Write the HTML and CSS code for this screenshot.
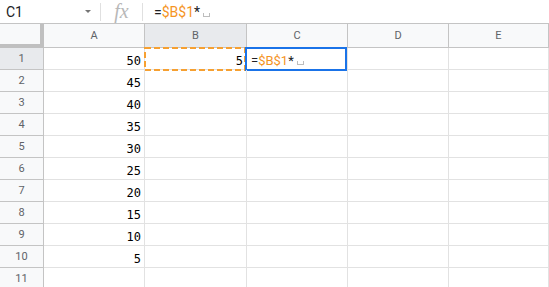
FILE: index.html
```html
<!DOCTYPE html>
<html>
<head>
	<title>Sheet</title>
	<meta charset="UTF-8">
	<link rel="stylesheet" href="styles.css">
</head>
<body>
	<div id="formula_bar">
		<div class="name_box"><span>C1</span><span class="caret"></span></div>
		<div class="fx_box">fx</div>
		<div class="formula">=<span class="ref">$B$1</span>*<span class="space_mark"></span></div>
	</div>
	<div id="sheet">
		<div class="corner"></div>
		<div class="col_head">A</div>
		<div class="col_head picked">B</div>
		<div class="col_head">C</div>
		<div class="col_head">D</div>
		<div class="col_head">E</div>

		<div class="row_head picked">1</div>
		<div class="cell num">50</div>
		<div class="cell num copied">5<svg class="copy_marks" width="102" height="24"><rect x="1" y="1" width="100" height="22" fill="none" stroke="#f6a031" stroke-width="2" stroke-dasharray="6 3" /></svg></div>
		<div class="cell active">=<span class="ref">$B$1</span>*<span class="space_mark"></span></div>
		<div class="cell"></div>
		<div class="cell"></div>

		<div class="row_head">2</div>
		<div class="cell num">45</div>
		<div class="cell"></div><div class="cell"></div><div class="cell"></div><div class="cell"></div>

		<div class="row_head">3</div>
		<div class="cell num">40</div>
		<div class="cell"></div><div class="cell"></div><div class="cell"></div><div class="cell"></div>

		<div class="row_head">4</div>
		<div class="cell num">35</div>
		<div class="cell"></div><div class="cell"></div><div class="cell"></div><div class="cell"></div>

		<div class="row_head">5</div>
		<div class="cell num">30</div>
		<div class="cell"></div><div class="cell"></div><div class="cell"></div><div class="cell"></div>

		<div class="row_head">6</div>
		<div class="cell num">25</div>
		<div class="cell"></div><div class="cell"></div><div class="cell"></div><div class="cell"></div>

		<div class="row_head">7</div>
		<div class="cell num">20</div>
		<div class="cell"></div><div class="cell"></div><div class="cell"></div><div class="cell"></div>

		<div class="row_head">8</div>
		<div class="cell num">15</div>
		<div class="cell"></div><div class="cell"></div><div class="cell"></div><div class="cell"></div>

		<div class="row_head">9</div>
		<div class="cell num">10</div>
		<div class="cell"></div><div class="cell"></div><div class="cell"></div><div class="cell"></div>

		<div class="row_head">10</div>
		<div class="cell num">5</div>
		<div class="cell"></div><div class="cell"></div><div class="cell"></div><div class="cell"></div>

		<div class="row_head">11</div>
		<div class="cell"></div>
		<div class="cell"></div><div class="cell"></div><div class="cell"></div><div class="cell"></div>
	</div>
</body>
</html>
```
FILE: styles.css
```css
html, body {
	margin: 0;
	overflow: hidden;
	background-color: white;
	font-family: Roboto, "Liberation Sans", sans-serif;
	color: #202124;
}

#formula_bar {
	display: flex;
	align-items: center;
	height: 23px;
	border-bottom: 1px solid #c4c4c4;
	font-size: 13px;
}

.name_box {
	width: 101px;
	box-sizing: border-box;
	display: flex;
	justify-content: space-between;
	align-items: center;
	padding: 0 9px 0 6px;
	border-right: 1px solid #e0e0e0;
	height: 18px;
	font-size: 14px;
}

.caret {
	width: 0;
	height: 0;
	border-left: 3px solid transparent;
	border-right: 3px solid transparent;
	border-top: 3px solid #757575;
}

.fx_box {
	width: 42px;
	box-sizing: border-box;
	height: 18px;
	border-right: 1px solid #e0e0e0;
	text-align: center;
	font-family: "Liberation Serif", serif;
	font-style: italic;
	font-size: 20px;
	line-height: 17px;
	color: #b8b8b8;
}

.formula {
	padding-left: 11px;
	font-size: 14px;
}

.ref {
	color: #f5941f;
}

.space_mark {
	display: inline-block;
	width: 5px;
	height: 3px;
	margin-left: 3px;
	border: 1px solid #bdbdbd;
	border-top: none;
}

#sheet {
	display: grid;
	grid-template-columns: 44px 101px 102px 101px 101px 1fr;
	grid-template-rows: 24px;
	grid-auto-rows: 22px;
}

#sheet > div {
	box-sizing: border-box;
	border-right: 1px solid #e2e2e2;
	border-bottom: 1px solid #e2e2e2;
}

#sheet > .corner {
	background-color: #f8f9fa;
	border-right: 4px solid #c0c0c0;
	border-bottom: 4px solid #c0c0c0;
}

#sheet > .col_head,
#sheet > .row_head {
	background-color: #f8f9fa;
	border-color: #c4c4c4;
	text-align: center;
	font-size: 11px;
	color: #5f6368;
}

.col_head {
	line-height: 23px;
}

.row_head {
	line-height: 21px;
}

#sheet > .picked {
	background-color: #e8eaed;
}

.cell {
	position: relative;
	font-size: 14px;
	line-height: 17px;
	padding: 5px 3px 0 4px;
}

.num {
	text-align: right;
	font-family: "DejaVu Sans Mono", monospace;
	font-size: 12px;
	color: #000;
}

.copy_marks {
	position: absolute;
	left: -1px;
	top: -1px;
}

.active::after {
	content: "";
	position: absolute;
	left: -2px;
	top: -1px;
	width: 102px;
	height: 24px;
	box-sizing: border-box;
	border: 2px solid #1a73e8;
}

.active {
	padding-top: 4px;
	font-size: 13px;
}
```
